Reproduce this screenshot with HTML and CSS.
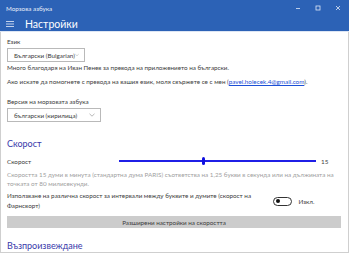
FILE: index.html
```html
<!DOCTYPE html>
<html lang="bg">
<head>
<meta charset="utf-8">
<link rel="stylesheet" href="styles.css">
</head>
<body>
<div class="window">
  <div class="titlebar">
    <span class="apptitle">Морзова азбука</span>
    <div class="controls">
      <span class="ctl"><svg width="6" height="6" viewBox="0 0 6 6"><path d="M1 3.5H5" stroke="#dfe8f7" stroke-width="0.8"/></svg></span>
      <span class="ctl"><svg width="6" height="6" viewBox="0 0 6 6"><rect x="1" y="1" width="4" height="4" fill="none" stroke="#dfe8f7" stroke-width="0.8"/></svg></span>
      <span class="ctl"><svg width="6" height="6" viewBox="0 0 6 6"><path d="M1 1L5 5M5 1L1 5" stroke="#dfe8f7" stroke-width="0.8"/></svg></span>
    </div>
  </div>
  <div class="header">
    <svg class="burger" width="8" height="6" viewBox="0 0 8 6"><path d="M0 0.5H8M0 3H8M0 5.5H8" stroke="#e8eefa" stroke-width="0.8"/></svg>
    <span class="pagetitle">Настройки</span>
  </div>
  <div class="content">
    <div class="label">Език</div>
    <div class="select s1"><span>Български (Bulgarian)</span><svg width="6" height="4" viewBox="0 0 6 4"><path d="M0.5 0.8L3 3.2L5.5 0.8" fill="none" stroke="#888" stroke-width="0.6"/></svg></div>
    <p class="text t1">Много благодаря на Иван Пенев за превода на приложението на български.</p>
    <p class="text t2">Ако искате да помогнете с превода на вашия език, моля свържете се с мен (<a class="link">pavel.holecek.4@gmail.com</a>).</p>
    <div class="label l2">Версия на морзовата азбука</div>
    <div class="select s2"><span>български (кирилица)</span><svg width="6" height="4" viewBox="0 0 6 4"><path d="M0.5 0.8L3 3.2L5.5 0.8" fill="none" stroke="#888" stroke-width="0.6"/></svg></div>
    <h2 class="section">Скорост</h2>
    <div class="speedrow">
      <span class="speedlabel">Скорост</span>
      <div class="slider"><div class="track"></div><div class="thumb"></div></div>
      <span class="speedval">15</span>
    </div>
    <p class="desc">Скоростта 15 думи в минута (стандартна дума PARIS) съответства на 1,25 букви в секунда или на дължината на точката от 80 милисекунди.</p>
    <div class="farnrow">
      <span class="farntext">Използване на различна скорост за интервали между буквите и думите (скорост на Фарнсворт)</span>
      <span class="toggle"><span class="knob"></span></span>
      <span class="toggletext">Изкл.</span>
    </div>
    <div class="button">Разширени настройки на скоростта</div>
    <h2 class="section s2h">Възпроизвеждане</h2>
  </div>
</div>
</body>
</html>
```
FILE: styles.css
```css
html, body { margin: 0; padding: 0; background: #fff; }
body { font-family: "Lato", "Noto Sans", sans-serif; color: #3c3c3c; width: 349px; height: 253px; overflow: hidden; }
.window { width: 349px; height: 253px; display: flex; flex-direction: column; }
.titlebar { height: 16px; background: #2c62b6; display: flex; align-items: center; justify-content: space-between; padding-left: 6px; }
.apptitle { font-size: 6.3px; color: #e6edf8; }
.controls { display: flex; height: 16px; margin-right: 1px; }
.ctl { width: 20px; display: flex; align-items: center; justify-content: center; }
.header { height: 16px; background: #2c62b6; display: flex; align-items: center; padding-left: 6px; border-bottom: 1px solid #dde6f4; }
.burger { margin-right: 11px; }
.pagetitle { font-size: 10.5px; color: #fff; }
.content { flex: 1; border: 1px solid #cfcfcf; border-top: none; padding: 6px 6px 0 6px; box-sizing: border-box; }
.label { font-size: 6.3px; line-height: 8px; }
.l2 { margin-top: 12px; }
.select { border: 1px solid #b9b9b9; height: 14px; box-sizing: border-box; display: flex; align-items: center; justify-content: space-between; padding: 0 5px 0 6px; font-size: 6.3px; margin-top: 2px; white-space: nowrap; }
.s1 { width: 78px; }
.s2 { width: 94px; }
.text { margin: 0; font-size: 6.3px; line-height: 8px; white-space: nowrap; }
.t1 { margin-top: 2px; }
.t2 { margin-top: 6px; }
.link { color: #1b4fd6; text-decoration: underline; }
.section { font-size: 9px; font-weight: normal; color: #3838aa; margin: 16px 0 0 0; line-height: 12px; }
.speedrow { display: flex; align-items: center; margin-top: 6px; height: 10px; }
.speedlabel { font-size: 6.3px; width: 112px; }
.slider { position: relative; width: 197px; height: 8px; display: flex; align-items: center; }
.track { width: 100%; height: 1.5px; background: #1f1fe6; }
.thumb { position: absolute; left: 83px; top: 0; width: 3px; height: 8px; border-radius: 1.5px; background: #1010e0; }
.speedval { font-size: 6.3px; margin-left: 5px; }
.desc { margin: 4px 0 0 0; font-size: 6.3px; line-height: 9px; color: #a0a0a0; width: 330px; }
.farnrow { display: flex; align-items: center; margin-top: 3px; }
.farntext { font-size: 6.3px; line-height: 10px; width: 246px; }
.toggle { margin-left: 20px; width: 15px; height: 7px; border: 1px solid #333; border-radius: 5px; display: flex; align-items: center; padding-left: 1.5px; box-sizing: content-box; }
.knob { width: 4px; height: 4px; border-radius: 50%; background: #111; }
.toggletext { font-size: 6.3px; margin-left: 7px; }
.button { margin-top: 5px; height: 12px; background: #cccccc; font-size: 6.3px; display: flex; align-items: center; justify-content: center; width: 334px; }
.s2h { margin-top: 12px; }
```
